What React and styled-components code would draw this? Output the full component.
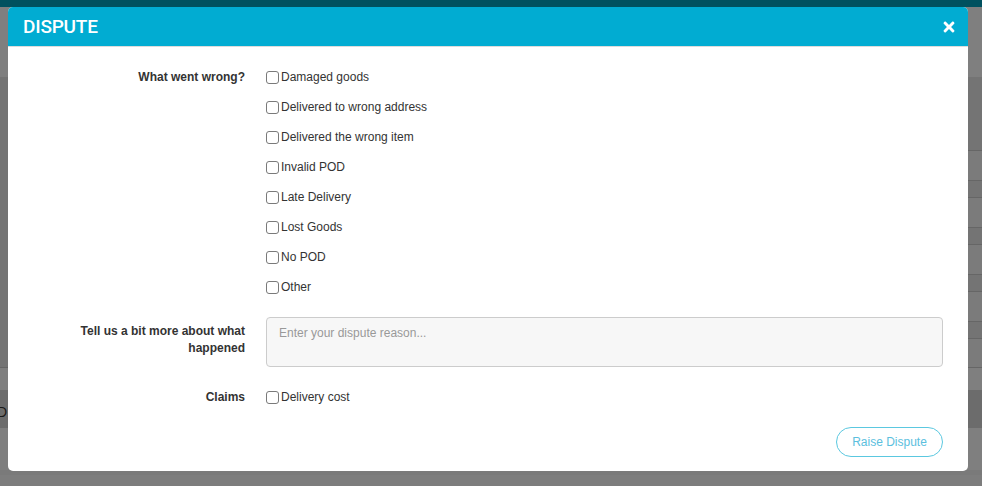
import React from "react";
import styled, { createGlobalStyle } from "styled-components";
import { FaTimes } from "react-icons/fa";

const GlobalStyle = createGlobalStyle`
  html, body {
    margin: 0;
    padding: 0;
    height: 100%;
    overflow: hidden;
  }
  body {
    font-family: "Liberation Sans", Arial, sans-serif;
    font-size: 12px;
    color: #333;
    background: #fff;
  }
`;

const Page = styled.div`
  position: relative;
  width: 982px;
  height: 486px;
  display: flex;
  flex-direction: column;
  overflow: hidden;
`;

const TopBar = styled.div`
  height: 7px;
  background: #00a3bf;
`;

const Block = styled.div`
  height: ${(p) => p.$h}px;
  background: ${(p) => p.$bg || "#fff"};
  border-top: ${(p) => (p.$line ? "1px solid #ccc" : "none")};
  display: flex;
  flex-direction: column;
  font-size: 14px;
  color: #333;
`;

const Band = styled.div`
  height: 290px;
  background: #e8e8e8;
  padding: 73px 0 0 20px;
  box-sizing: border-box;
`;

const TableRow = styled.div`
  height: ${(p) => (p.$sub ? 16 : 29)}px;
  background: ${(p) => (p.$sub ? "#e8e8e8" : "#f6f6f6")};
  border-top: 1px solid #ccc;
`;

const Cut = styled.span`
  margin: 14px 0 0 -3px;
  font-size: 14px;
`;

const Overlay = styled.div`
  position: absolute;
  inset: 0;
  background: rgba(0, 0, 0, 0.5);
`;

const Modal = styled.div`
  position: absolute;
  top: 7px;
  left: 8px;
  width: 960px;
  height: 464px;
  background: #fff;
  border-radius: 5px;
  overflow: hidden;
  display: flex;
  flex-direction: column;
`;

const Header = styled.div`
  height: 39px;
  background: #01acd2;
  border-bottom: 1px solid #dcdcdc;
  display: flex;
  align-items: center;
  justify-content: space-between;
  padding: 0 11px 0 15px;
`;

const Title = styled.h4`
  margin: 0;
  color: #fff;
  font-family: Roboto, "Noto Sans", sans-serif;
  font-weight: 500;
  font-size: 19px;
  letter-spacing: -0.2px;
`;

const Close = styled.button`
  border: 0;
  background: none;
  padding: 0;
  color: #fff;
  display: flex;
  cursor: pointer;
`;

const Body = styled.div`
  padding: 20px 25px 0 0;
  display: flex;
  flex-direction: column;
  gap: 20px;
`;

const FormRow = styled.div`
  display: grid;
  grid-template-columns: 237px 1fr;
  column-gap: 21px;
  align-items: start;
`;

const Label = styled.label`
  justify-self: end;
  max-width: 172px;
  text-align: right;
  font-weight: bold;
  font-size: 12px;
  line-height: 17px;
  padding-top: ${(p) => p.$pt ?? 2}px;
  color: #333;
`;

const Options = styled.div`
  display: flex;
  flex-direction: column;
  gap: 10px;
`;

const Option = styled.label`
  display: flex;
  align-items: center;
  height: 20px;
  font-size: 12px;
  color: #333;
`;

const Box = styled.input`
  appearance: none;
  box-sizing: border-box;
  width: 13px;
  height: 13px;
  margin: 0 2px 0 0;
  border: 1px solid #7a7a7a;
  border-radius: 3px;
  background: #fff;
  &:checked {
    background: #01acd2;
    border-color: #01acd2;
  }
`;

const Reason = styled.textarea`
  height: 50px;
  box-sizing: border-box;
  resize: none;
  background: #f7f7f7;
  border: 1px solid #ccc;
  border-radius: 4px;
  padding: 7px 12px;
  font-family: "Liberation Sans", Arial, sans-serif;
  font-size: 12px;
  line-height: 17px;
  color: #333;
  &::placeholder {
    color: #999;
  }
`;

const Footer = styled.div`
  display: flex;
  justify-content: flex-end;
`;

const RaiseButton = styled.button`
  width: 107px;
  height: 30px;
  border: 1px solid #5bc8e0;
  border-radius: 15px;
  background: #fff;
  color: #5bc0de;
  font-family: "Liberation Sans", Arial, sans-serif;
  font-size: 12px;
  cursor: pointer;
`;

const reasons = [
  "Damaged goods",
  "Delivered to wrong address",
  "Delivered the wrong item",
  "Invalid POD",
  "Late Delivery",
  "Lost Goods",
  "No POD",
  "Other",
];

const App = () => {
  return (
    <>
      <GlobalStyle />
      <Page>
        <TopBar />
        <Block $h={70} />
        <Band>
          {[0, 1, 2, 3, 4].map((i) => (
            <React.Fragment key={i}>
              <TableRow />
              <TableRow $sub />
            </React.Fragment>
          ))}
        </Band>
        <Block $h={23} $line />
        <Block $h={38} $bg="#d8d8d8">
          <Cut>D</Cut>
        </Block>
        <Block $h={42} />
        <Block $h={5} $bg="#f4f4f4" />
        <Block $h={11} $bg="#fafafa" />
        <Overlay />
        <Modal>
          <Header>
            <Title>DISPUTE</Title>
            <Close aria-label="Close">
              <FaTimes size={16} />
            </Close>
          </Header>
          <Body>
            <FormRow>
              <Label>What went wrong?</Label>
              <Options>
                {reasons.map((r) => (
                  <Option key={r}>
                    <Box type="checkbox" />
                    {r}
                  </Option>
                ))}
              </Options>
            </FormRow>
            <FormRow>
              <Label $pt={6}>Tell us a bit more about what happened</Label>
              <Reason placeholder="Enter your dispute reason..." />
            </FormRow>
            <FormRow>
              <Label>Claims</Label>
              <Option>
                <Box type="checkbox" />
                Delivery cost
              </Option>
            </FormRow>
            <Footer>
              <RaiseButton>Raise Dispute</RaiseButton>
            </Footer>
          </Body>
        </Modal>
      </Page>
    </>
  );
};

export default App;
